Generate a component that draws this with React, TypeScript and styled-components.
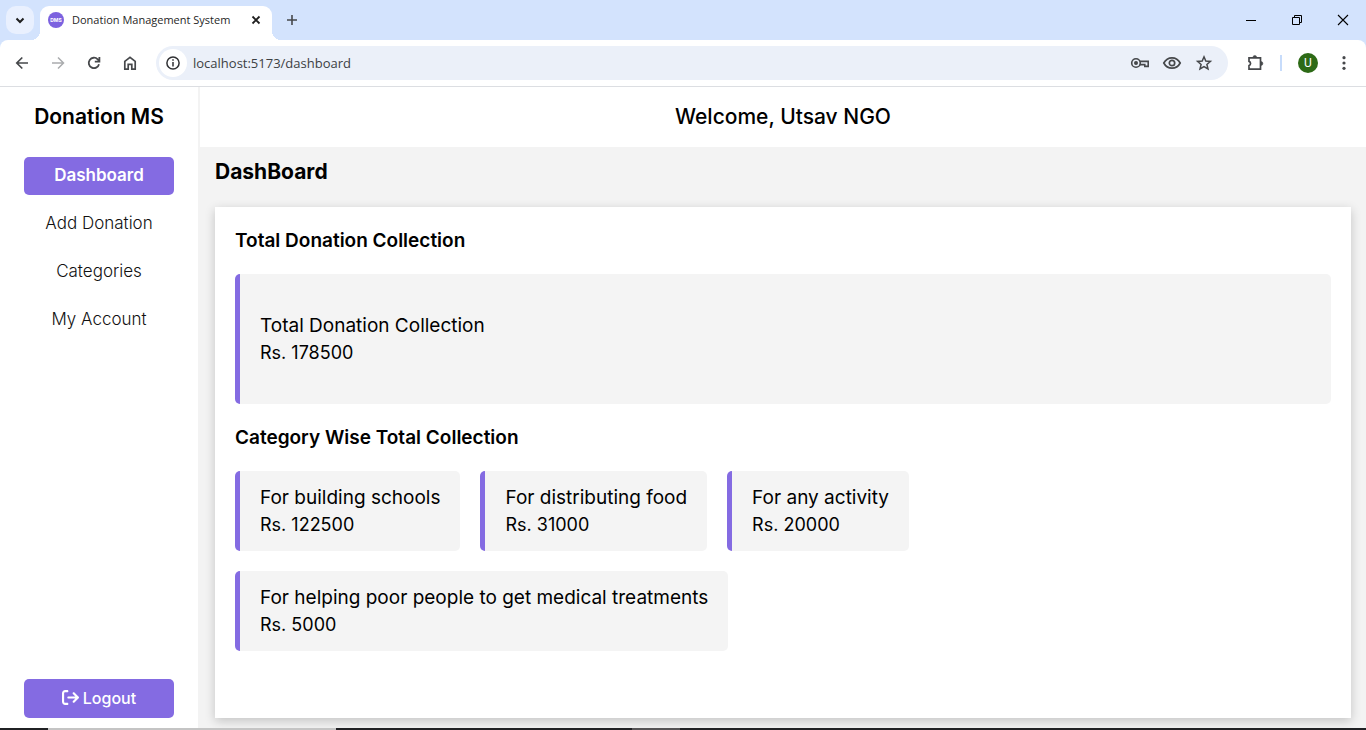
import React from "react";
import styled, { createGlobalStyle } from "styled-components";
import { FaArrowRightFromBracket } from "react-icons/fa6";

const GlobalStyle = createGlobalStyle`
  *, *::before, *::after { box-sizing: border-box; }
  body { margin: 0; background: #f3f3f3; }
  h1, h2, h3, p, ul { margin: 0; padding: 0; }
  button, input { font: inherit; }
  a { color: inherit; text-decoration: none; }
`;

const purple = "#846be2";

const Screen = styled.div`
  display: flex;
  flex-direction: column;
  min-height: 100vh;
  font-family: Inter, "Open Sans", sans-serif;
  color: #000;
`;

/* Browser chrome */

const TabStrip = styled.div`
  display: flex;
  align-items: center;
  height: 40px;
  padding-left: 6px;
  background: #d3e3fd;
  font-family: "Open Sans", "Noto Sans", sans-serif;
`;

const IconButton = styled.button<{ $width?: number }>`
  display: flex;
  align-items: center;
  justify-content: center;
  flex: none;
  width: ${(p) => p.$width ?? 36}px;
  height: 32px;
  padding: 0;
  border: 0;
  background: none;
`;

const TabSearch = styled(IconButton)`
  height: 28px;
  border-radius: 10px;
  background: #e9f0fe;
`;

const Tab = styled.div`
  position: relative;
  display: flex;
  align-items: center;
  align-self: flex-end;
  width: 232px;
  height: 34px;
  margin-left: 6px;
  padding: 0 4px 6px 8px;
  border-radius: 9px 9px 0 0;
  background: #fff;

  &::before,
  &::after {
    content: "";
    position: absolute;
    bottom: 0;
    width: 9px;
    height: 9px;
  }
  &::before {
    right: 100%;
    background: radial-gradient(circle at 0 0, transparent 9px, #fff 9px);
  }
  &::after {
    left: 100%;
    background: radial-gradient(circle at 100% 0, transparent 9px, #fff 9px);
  }
`;

const TabTitle = styled.span`
  flex: 1;
  margin-left: 8px;
  font-size: 11px;
  line-height: 16px;
  white-space: nowrap;
  color: #1f1f1f;
`;

const NewTab = styled(IconButton)`
  margin-left: 2px;
`;

const WindowControls = styled.div`
  display: flex;
  margin-left: auto;
`;

const Toolbar = styled.div`
  display: flex;
  align-items: center;
  height: 47px;
  padding: 0 4px;
  border-bottom: 1px solid #dcdee2;
  border-radius: 8px 8px 0 0;
  background: #fff;
`;

const ToolbarBackdrop = styled.div`
  background: linear-gradient(#d3e3fd 10px, #fff 10px);
`;

const AddressBar = styled.div`
  display: flex;
  align-items: center;
  flex: 1;
  height: 34px;
  margin: 0 9px 0 8px;
  padding: 0 8px 0 3px;
  border-radius: 17px;
  background: #ebf0f9;
`;

const SiteInfo = styled(IconButton)`
  height: 28px;
  border-radius: 14px;
  background: #fff;
`;

const Address = styled.input`
  flex: 1;
  min-width: 0;
  margin-left: 6px;
  padding: 0;
  border: 0;
  outline: 0;
  background: none;
  font-family: "Open Sans", "Noto Sans", sans-serif;
  font-size: 13px;
  line-height: 20px;
  color: #3c4043;
`;

const Divider = styled.span`
  width: 2px;
  height: 16px;
  margin: 0 8px 0 7px;
  background: #c7dcfb;
`;

const Avatar = styled.button`
  width: 20px;
  height: 20px;
  margin: 0 8px;
  padding: 0;
  border: 0;
  border-radius: 50%;
  background: #2d6a16;
  color: #fff;
  font-family: Roboto, sans-serif;
  font-size: 12px;
  line-height: 20px;
`;

/* Application */

const Layout = styled.div`
  display: grid;
  grid-template-columns: 199px 1fr;
  flex: 1;
`;

const Sidebar = styled.aside`
  display: flex;
  flex-direction: column;
  padding: 15px 24px 10px;
  border-right: 1px solid #f3f3f3;
  background: #fff;
  text-align: center;
`;

const Brand = styled.h1`
  font-size: 21px;
  font-weight: 600;
  line-height: 30px;
  white-space: nowrap;
`;

const Nav = styled.nav`
  display: flex;
  flex-direction: column;
  gap: 10px;
  margin-top: 25px;
`;

const NavLink = styled.a<{ $active?: boolean }>`
  padding-bottom: 2px;
  border-radius: 5px;
  font-size: 17px;
  font-weight: ${(p) => (p.$active ? 600 : 300)};
  line-height: 36px;
  background: ${(p) => (p.$active ? purple : "transparent")};
  && { color: ${(p) => (p.$active ? "#fff" : "#111")}; }
`;

const Logout = styled.button`
  display: flex;
  align-items: center;
  justify-content: center;
  gap: 4px;
  height: 39px;
  margin-top: auto;
  padding: 0 0 2px;
  border: 0;
  border-radius: 5px;
  background: ${purple};
  color: #fff;
  font-size: 16px;
  font-weight: 500;
`;

const Content = styled.div`
  display: flex;
  flex-direction: column;
  min-width: 0;
`;

const Header = styled.header`
  height: 60px;
  margin-left: 1px;
  background: #fff;
  font-size: 21px;
  font-weight: 500;
  line-height: 60px;
  text-align: center;
`;

const Main = styled.main`
  display: flex;
  flex-direction: column;
  flex: 1;
  gap: 20px;
  padding: 10px 15px 10px 16px;
`;

const PageTitle = styled.h2`
  font-size: 21px;
  font-weight: 700;
  line-height: 30px;
`;

const Panel = styled.section`
  display: flex;
  flex-direction: column;
  flex: 1;
  gap: 20px;
  padding: 20px;
  background: #fff;
  box-shadow: 0 3px 10px rgba(0, 0, 0, 0.2);
`;

const SectionTitle = styled.h3`
  font-size: 19px;
  font-weight: 600;
  line-height: 27px;
`;

const CardList = styled.div`
  display: flex;
  flex-wrap: wrap;
  gap: 20px;
`;

const Card = styled.article<{ $large?: boolean }>`
  display: flex;
  flex-direction: column;
  justify-content: center;
  min-height: ${(p) => (p.$large ? 130 : 80)}px;
  padding: 0 20px;
  border-left: 5px solid ${purple};
  border-radius: 5px;
  background: #f4f4f4;
  line-height: 27px;
`;

const CardLabel = styled.p`
  font-size: 19px;
`;

const CardAmount = styled.p`
  font-size: 18px;
`;

const Taskbar = styled.div`
  display: flex;
  height: 2px;
  background: #202124;
`;

const TaskbarItem = styled.span<{ $width: number; $offset: number; $color: string }>`
  width: ${(p) => p.$width}px;
  margin-left: ${(p) => p.$offset}px;
  background: ${(p) => p.$color};
`;

const Glyph = ({ size = 20, d, width = 1.7, color = "#46484b", children }: {
  size?: number; d?: string; width?: number; color?: string; children?: React.ReactNode;
}) => (
  <svg width={size} height={size} viewBox={`0 0 ${size} ${size}`} fill="none" stroke={color} strokeWidth={width} aria-hidden="true">
    {d && <path d={d} />}
    {children}
  </svg>
);

const categories = [
  { name: "For building schools", total: 122500 },
  { name: "For distributing food", total: 31000 },
  { name: "For any activity", total: 20000 },
  { name: "For helping poor people to get medical treatments", total: 5000 },
];

const links = ["Dashboard", "Add Donation", "Categories", "My Account"];

const BrowserChrome = () => (
  <>
    <TabStrip>
      <TabSearch $width={28} aria-label="Search tabs">
        <Glyph size={16} d="M4.5 6.5 8 10l3.5-3.5" width={2} color="#1f1f1f" />
      </TabSearch>
      <Tab>
        <svg width="16" height="16" viewBox="0 0 16 16" aria-hidden="true">
          <circle cx="8" cy="8" r="8" fill="#7c62df" />
          <text x="8" y="10" textAnchor="middle" fontFamily="Inter, sans-serif" fontSize="5" fontWeight="700" fill="#fff">DMS</text>
        </svg>
        <TabTitle>Donation Management System</TabTitle>
        <IconButton $width={24} aria-label="Close tab">
          <Glyph size={16} d="m4.5 4.5 7 7m0-7-7 7" width={1.8} color="#1f1f1f" />
        </IconButton>
      </Tab>
      <NewTab aria-label="New tab">
        <Glyph size={16} d="M8 3v10M3 8h10" width={1.6} />
      </NewTab>
      <WindowControls>
        <IconButton $width={46} aria-label="Minimize">
          <Glyph size={16} d="M3 8.5h10" width={1} color="#000" />
        </IconButton>
        <IconButton $width={46} aria-label="Restore">
          <Glyph size={16} d="M3.5 5.5h7v7h-7zM5.5 5.5v-2h7v7h-2" width={1} color="#000" />
        </IconButton>
        <IconButton $width={46} aria-label="Close">
          <Glyph size={16} d="m3 3 10 10m0-10L3 13" width={1.1} color="#000" />
        </IconButton>
      </WindowControls>
    </TabStrip>
    <ToolbarBackdrop>
      <Toolbar>
        <IconButton aria-label="Back">
          <Glyph d="M16 10H5M10.300 4.500 4.800 10l5.500 5.500" />
        </IconButton>
        <IconButton aria-label="Forward">
          <Glyph d="M4 10h11.2M10 4.5l5.5 5.5-5.5 5.5" color="#aaacae" width={1.5} />
        </IconButton>
        <IconButton aria-label="Reload">
          <Glyph d="M15 11.200A5.200 5.200 0 1 1 13.700 6.300l1.600 1.600M15.400 4v4.600h-4.600" width={1.8} />
        </IconButton>
        <IconButton aria-label="Home">
          <Glyph d="M4.800 8.400 10 4.400l5.200 4v7.800h-3.400v-4.800H8.200v4.800H4.800z" />
        </IconButton>
        <AddressBar>
          <SiteInfo $width={28} aria-label="View site information">
            <Glyph d="M10 9v4.400M10 6.200v1.600" width={1.5} color="#303134">
              <circle cx="10" cy="10" r="6.1" />
            </Glyph>
          </SiteInfo>
          <Address aria-label="Address" defaultValue="localhost:5173/dashboard" />
          <IconButton $width={32} aria-label="Manage passwords">
            <Glyph d="M9.600 8.400H18.200v5h-3.400v-1.800H9.600" width={1.6}>
              <circle cx="6" cy="10" r="4.3" />
              <circle cx="6" cy="10" r="1.2" fill="#46484b" />
            </Glyph>
          </IconButton>
          <IconButton $width={32} aria-label="Show page">
            <Glyph d="M1.800 10C3.600 6.600 6.600 4.800 10 4.800s6.400 1.800 8.200 5.200c-1.800 3.400-4.800 5.200-8.200 5.200S3.600 13.400 1.800 10Z" width={1.7}>
              <circle cx="10" cy="10" r="2.7" />
            </Glyph>
          </IconButton>
          <IconButton $width={32} aria-label="Bookmark this tab">
            <Glyph d="m10 3.800 1.800 4.200 4.600.4-3.500 3 1.100 4.500-4-2.400-4 2.400 1.100-4.500-3.500-3 4.600-.4z" width={1.5} />
          </IconButton>
        </AddressBar>
        <IconButton aria-label="Extensions">
          <Glyph d="M4 4.800h11.500v11.400H4v-3.600a2.200 2.200 0 0 0 0-4.200z" width={1.7}>
            <path d="M8 4.200a1.800 1.800 0 0 1 3.600 0zM16 8.600a1.900 1.900 0 0 1 0 3.800z" fill="#46484b" strokeWidth="0.5" />
          </Glyph>
        </IconButton>
        <Divider />
        <Avatar aria-label="Profile">U</Avatar>
        <IconButton aria-label="Menu">
          <svg width="20" height="20" viewBox="0 0 20 20" fill="#46484b" aria-hidden="true">
            <circle cx="10" cy="4.700" r="1.6" /><circle cx="10" cy="10" r="1.6" /><circle cx="10" cy="15.300" r="1.6" />
          </svg>
        </IconButton>
      </Toolbar>
    </ToolbarBackdrop>
  </>
);

export default function App() {
  return (
    <Screen>
      <GlobalStyle />
      <BrowserChrome />
      <Layout>
        <Sidebar>
          <Brand>Donation MS</Brand>
          <Nav>
            {links.map((label, i) => (
              <NavLink key={label} href="#" $active={i === 0}>{label}</NavLink>
            ))}
          </Nav>
          <Logout>
            <FaArrowRightFromBracket size={17} aria-hidden="true" />
            Logout
          </Logout>
        </Sidebar>
        <Content>
          <Header>Welcome, Utsav NGO</Header>
          <Main>
            <PageTitle>DashBoard</PageTitle>
            <Panel>
              <SectionTitle>Total Donation Collection</SectionTitle>
              <Card $large>
                <CardLabel>Total Donation Collection</CardLabel>
                <CardAmount>Rs. 178500</CardAmount>
              </Card>
              <SectionTitle>Category Wise Total Collection</SectionTitle>
              <CardList>
                {categories.map((c) => (
                  <Card key={c.name}>
                    <CardLabel>{c.name}</CardLabel>
                    <CardAmount>Rs. {c.total}</CardAmount>
                  </Card>
                ))}
              </CardList>
            </Panel>
          </Main>
        </Content>
      </Layout>
      <Taskbar>
        <TaskbarItem $offset={48} $width={288} $color="#c4c4c4" />
        <TaskbarItem $offset={296} $width={48} $color="#555355" />
      </Taskbar>
    </Screen>
  );
}
